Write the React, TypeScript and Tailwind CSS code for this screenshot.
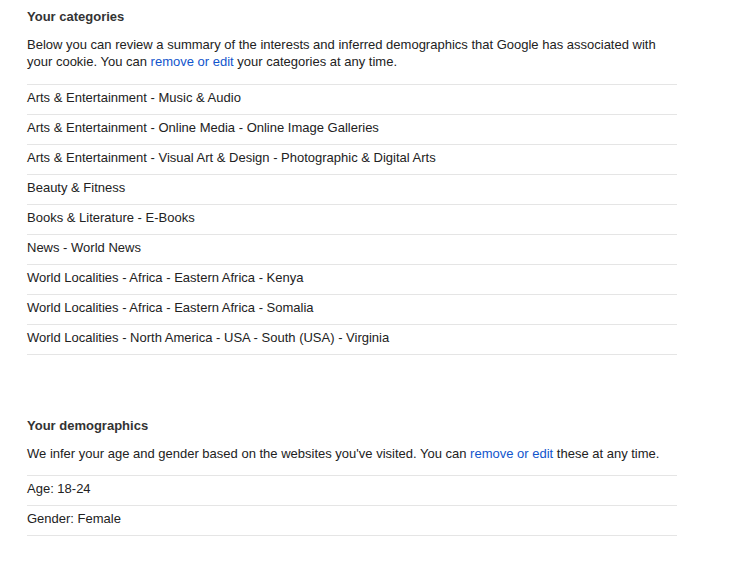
const categories = [
  "Arts & Entertainment - Music & Audio",
  "Arts & Entertainment - Online Media - Online Image Galleries",
  "Arts & Entertainment - Visual Art & Design - Photographic & Digital Arts",
  "Beauty & Fitness",
  "Books & Literature - E-Books",
  "News - World News",
  "World Localities - Africa - Eastern Africa - Kenya",
  "World Localities - Africa - Eastern Africa - Somalia",
  "World Localities - North America - USA - South (USA) - Virginia",
];

const demographics = ["Age: 18-24", "Gender: Female"];

function Rows({ items }: { items: string[] }) {
  return (
    <ul className="border-b border-[#e5e5e5]">
      {items.map((item) => (
        <li key={item} className="flex h-[30px] items-center border-t border-[#e5e5e5] pb-[4px]">
          {item}
        </li>
      ))}
    </ul>
  );
}

export default function App() {
  return (
    <div
      className="min-h-[569px] bg-white pl-[27px] text-[13px] text-[#222]"
      style={{ fontFamily: '"Liberation Sans", Arial, sans-serif' }}
    >
      <div className="w-[650px]">
        <section className="pt-[8px]">
          <h2 className="text-[13px] font-bold leading-[18px] text-[#333]">Your categories</h2>
          <p className="mt-[10px] leading-[17px]">
            Below you can review a summary of the interests and inferred demographics that Google has associated with
            your cookie. You can <a className="text-[#15c]">remove or edit</a> your categories at any time.
          </p>
          <div className="mt-[14px]">
            <Rows items={categories} />
          </div>
        </section>

        <section className="mt-[62px]">
          <h2 className="text-[13px] font-bold leading-[18px] text-[#333]">Your demographics</h2>
          <p className="mt-[10px] leading-[17px]">
            We infer your age and gender based on the websites you've visited. You can{" "}
            <a className="text-[#15c]">remove or edit</a> these at any time.
          </p>
          <div className="mt-[13px]">
            <Rows items={demographics} />
          </div>
        </section>
      </div>
    </div>
  );
}
